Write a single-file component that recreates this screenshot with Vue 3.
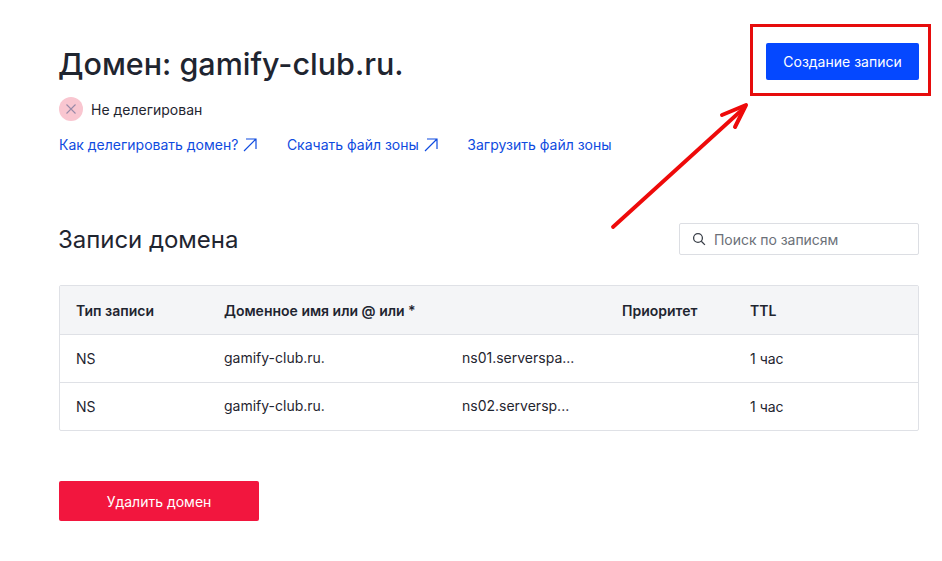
<template>
  <div class="page">
    <header class="top">
      <div class="domain-info">
        <h1>Домен: gamify-club.ru.</h1>
        <div class="status">
          <span class="status-icon">
            <svg width="12" height="12" viewBox="0 0 12 12" fill="none">
              <path d="M1.5 1.5l9 9M10.5 1.5l-9 9" stroke="#9a8aa8" stroke-width="1.1" />
            </svg>
          </span>
          <span class="status-text">Не делегирован</span>
        </div>
        <div class="links">
          <a v-for="link in links" :key="link.text" href="#" @click.prevent>
            {{ link.text }}
            <svg v-if="link.external" width="14" height="14" viewBox="0 0 14 14" fill="none">
              <path d="M1 13L13 1M3 1h10v10" stroke="#0f4be0" stroke-width="1.2" />
            </svg>
          </a>
        </div>
      </div>
      <button class="btn-create">Создание записи</button>
    </header>

    <section class="records-head">
      <h2>Записи домена</h2>
      <label class="search">
        <svg width="14" height="14" viewBox="0 0 14 14" fill="none">
          <circle cx="6" cy="6" r="4.4" stroke="#3a3f48" stroke-width="1.3" />
          <path d="M9.3 9.3l3.6 3.6" stroke="#3a3f48" stroke-width="1.3" />
        </svg>
        <input type="text" placeholder="Поиск по записям" />
      </label>
    </section>

    <div class="table">
      <div class="row head">
        <div v-for="title in columns" :key="title">{{ title }}</div>
      </div>
      <div class="row" v-for="rec in records" :key="rec.value">
        <div>{{ rec.type }}</div>
        <div class="high">{{ rec.name }}</div>
        <div class="high">{{ rec.value }}</div>
        <div></div>
        <div>{{ rec.ttl }}</div>
      </div>
    </div>

    <button class="btn-delete">Удалить домен</button>

    <!-- пометки поверх скриншота -->
    <div class="mark-box"></div>
    <svg class="mark-arrow" width="150" height="135" viewBox="0 0 150 135" fill="none">
      <path d="M3 125L134 6" stroke="#ee0a0a" stroke-width="3.8" stroke-linecap="round" />
      <path d="M112 13L136 3L125 25" stroke="#ee0a0a" stroke-width="4" stroke-linecap="round" stroke-linejoin="round" />
    </svg>
  </div>
</template>

<script setup>
const links = [
  { text: 'Как делегировать домен?', external: true },
  { text: 'Скачать файл зоны', external: true },
  { text: 'Загрузить файл зоны', external: false }
]

const columns = ['Тип записи', 'Доменное имя или @ или *', '', 'Приоритет', 'TTL']

const records = [
  { type: 'NS', name: 'gamify-club.ru.', value: 'ns01.serverspa...', ttl: '1 час' },
  { type: 'NS', name: 'gamify-club.ru.', value: 'ns02.serversp...', ttl: '1 час' }
]
</script>

<style>
html,
body {
  background: #fff;
}
</style>

<style scoped>
.page {
  position: relative;
  box-sizing: border-box;
  height: 561px;
  padding: 43px 23px 0 59px;
  overflow: hidden;
  font-family: Inter, 'Noto Sans', sans-serif;
  color: #1f2530;
}

.top {
  display: flex;
  justify-content: space-between;
  align-items: flex-start;
}

h1 {
  margin: 0 0 0 -1px;
  font-size: 30.5px;
  line-height: 41px;
  font-weight: 500;
}

.status {
  display: flex;
  align-items: flex-start;
  gap: 8px;
  margin-top: 13px;
  font-size: 14px;
  line-height: 24px;
}

.status-text {
  padding-top: 1px;
}

.status-icon {
  display: flex;
  align-items: center;
  justify-content: center;
  width: 24px;
  height: 24px;
  border-radius: 50%;
  background: #f9c6d0;
}

.links {
  display: flex;
  gap: 29.5px;
  margin-top: 13px;
}

.links a {
  display: flex;
  align-items: center;
  gap: 5px;
  font-size: 14px;
  line-height: 20px;
  color: #0f4be0;
  text-decoration: none;
}

button {
  border: none;
  border-radius: 2px;
  color: #fff;
  font-family: inherit;
  font-size: 14px;
  font-weight: 400;
}

.btn-create {
  width: 153px;
  height: 37px;
  background: #0548ff;
}

.records-head {
  display: flex;
  justify-content: space-between;
  align-items: center;
  margin-top: 67px;
}

h2 {
  margin: 2px 0 0 -1px;
  font-size: 24px;
  line-height: 32px;
  font-weight: 400;
  letter-spacing: -0.04px;
}

.search {
  box-sizing: border-box;
  display: flex;
  align-items: center;
  gap: 8px;
  width: 240px;
  height: 32px;
  padding: 0 12px;
  border: 1px solid #dcdee3;
  border-radius: 2px;
}

.search input {
  flex: 1;
  min-width: 0;
  border: none;
  outline: none;
  padding: 0;
  font-family: inherit;
  font-size: 14px;
  letter-spacing: -0.05px;
}

.search input::placeholder {
  color: #6b7078;
  opacity: 1;
}

.table {
  margin-top: 29px;
  border: 1px solid #dfe1e6;
  border-radius: 2px;
}

.row {
  display: grid;
  grid-template-columns: 148px 238px 160px 128px 1fr;
  align-items: center;
  height: 47px;
  padding-left: 16px;
  font-size: 14px;
  border-top: 1px solid #dfe1e6;
}

.row.head {
  height: 48px;
  border-top: none;
  background: #f4f5f7;
  font-weight: 600;
}

.high {
  margin-top: -3px;
}

.btn-delete {
  display: block;
  width: 200px;
  height: 40px;
  margin-top: 50px;
  background: #f2163e;
}

.mark-box {
  position: absolute;
  left: 750px;
  top: 24px;
  width: 181px;
  height: 72px;
  box-sizing: border-box;
  border: 3px solid #e60c0c;
}

.mark-arrow {
  position: absolute;
  left: 610px;
  top: 102px;
}
</style>
